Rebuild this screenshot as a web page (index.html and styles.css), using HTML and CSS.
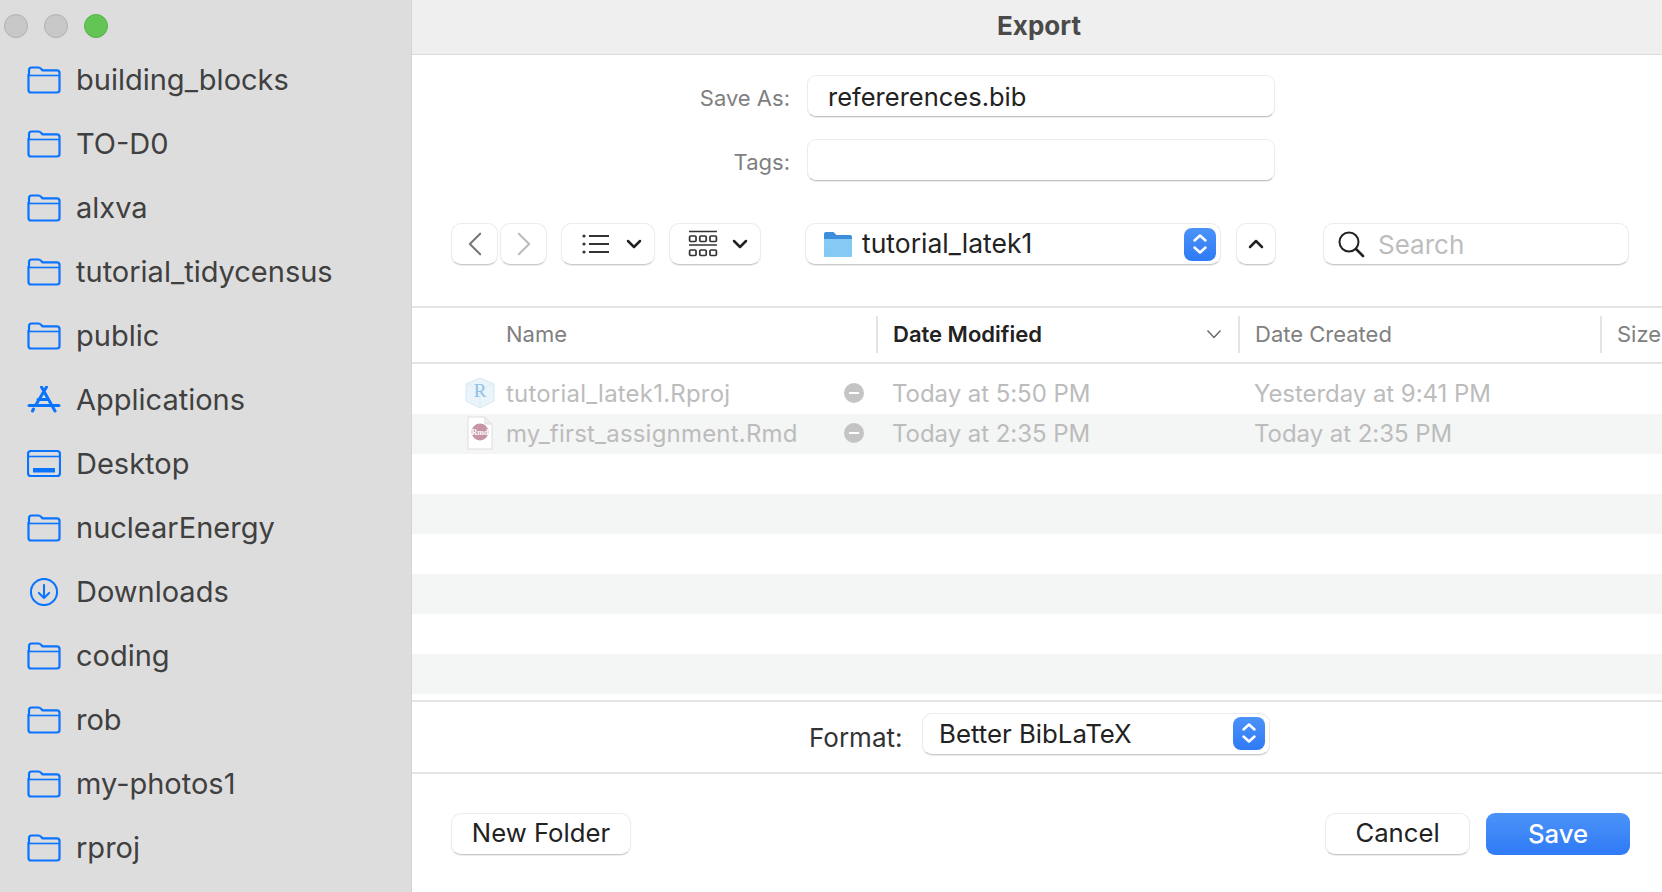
FILE: index.html
```html
<!DOCTYPE html>
<html lang="en">
<head>
    <meta charset="UTF-8">
    <title>Export</title>
    <link rel="stylesheet" href="styles.css">
</head>
<body>
    <svg class="defs" width="0" height="0">
        <symbol id="folder" viewBox="0 0 34 28">
            <path d="M2 9V4.200C2 2.600 2.900 1.500 4.500 1.500H11.500C12.600 1.500 13.200 1.900 14 2.700L15.500 4.300H30C31.600 4.300 32.500 5.200 32.500 6.800V24C32.500 25.600 31.600 26.500 30 26.500H4C2.400 26.500 1.500 25.600 1.500 24V8" fill="none" stroke="#0a74ff" stroke-width="2.200"/>
            <path d="M1.500 9.500H32.500" fill="none" stroke="#0a74ff" stroke-width="1.600"/>
        </symbol>
        <symbol id="stepper" viewBox="0 0 32 32">
            <path d="M10.500 12.500L16 7.500L21.500 12.500M10.500 19.500L16 24.500L21.500 19.500" fill="none" stroke="#fff" stroke-width="2.500" stroke-linecap="round" stroke-linejoin="round"/>
        </symbol>
        <symbol id="chev" viewBox="0 0 16 10">
            <path d="M2 2L8 8L14 2" fill="none" stroke="#222" stroke-width="2.500" stroke-linecap="round" stroke-linejoin="round"/>
        </symbol>
    </svg>

    <div class="window">
        <aside class="sidebar">
            <div class="traffic">
                <span class="light"></span>
                <span class="light"></span>
                <span class="light green"></span>
            </div>
            <ul class="places">
                <li><svg class="place-icon"><use href="#folder"/></svg>building_blocks</li>
                <li><svg class="place-icon"><use href="#folder"/></svg>TO-D0</li>
                <li><svg class="place-icon"><use href="#folder"/></svg>alxva</li>
                <li><svg class="place-icon"><use href="#folder"/></svg>tutorial_tidycensus</li>
                <li><svg class="place-icon"><use href="#folder"/></svg>public</li>
                <li>
                    <svg class="place-icon" viewBox="0 0 34 28">
                        <path d="M14.500 1L28 25M19.500 1L8.500 19.500M6.500 23L5.500 25M2 19.500H32M11 13.500H21" fill="none" stroke="#0a74ff" stroke-width="3" stroke-linecap="round"/>
                    </svg>Applications
                </li>
                <li>
                    <svg class="place-icon" viewBox="0 0 34 28">
                        <rect x="1" y="1" width="32" height="25" rx="3" fill="none" stroke="#0a74ff" stroke-width="2.200"/>
                        <path d="M1 6.500H33" stroke="#0a74ff" stroke-width="1.600"/>
                        <rect x="6" y="18" width="22" height="4.500" fill="#0a74ff"/>
                    </svg>Desktop
                </li>
                <li><svg class="place-icon"><use href="#folder"/></svg>nuclearEnergy</li>
                <li>
                    <svg class="place-icon" viewBox="0 0 34 30">
                        <circle cx="17" cy="15" r="14" fill="none" stroke="#0a74ff" stroke-width="2.200"/>
                        <path d="M17 7.500V21.500M11.500 16L17 21.500L22.500 16" fill="none" stroke="#0a74ff" stroke-width="2.200" stroke-linecap="round" stroke-linejoin="round"/>
                    </svg>Downloads
                </li>
                <li><svg class="place-icon"><use href="#folder"/></svg>coding</li>
                <li><svg class="place-icon"><use href="#folder"/></svg>rob</li>
                <li><svg class="place-icon"><use href="#folder"/></svg>my-photos1</li>
                <li><svg class="place-icon"><use href="#folder"/></svg>rproj</li>
            </ul>
        </aside>

        <main class="dialog">
            <header class="titlebar">Export</header>

            <div class="form-row first">
                <label class="form-label">Save As:</label>
                <div class="field">refererences.bib</div>
            </div>
            <div class="form-row">
                <label class="form-label">Tags:</label>
                <div class="field"></div>
            </div>

            <div class="toolbar">
                <div class="nav">
                    <button class="ctl nav-btn">
                        <svg width="14" height="24" viewBox="0 0 16 28"><path d="M14 2L2 14L14 26" fill="none" stroke="#777" stroke-width="2.400" stroke-linecap="round" stroke-linejoin="round"/></svg>
                    </button>
                    <button class="ctl nav-btn">
                        <svg width="14" height="24" viewBox="0 0 16 28"><path d="M2 2L14 14L2 26" fill="none" stroke="#bbb" stroke-width="2.400" stroke-linecap="round" stroke-linejoin="round"/></svg>
                    </button>
                </div>
                <button class="ctl view-btn list-btn">
                    <svg width="28" height="20" viewBox="0 0 28 20"><path d="M7 2H27M7 10H27M7 18H27" stroke="#333" stroke-width="1.800"/><circle cx="2" cy="2" r="1.600" fill="#333"/><circle cx="2" cy="10" r="1.600" fill="#333"/><circle cx="2" cy="18" r="1.600" fill="#333"/></svg>
                    <svg class="chev"><use href="#chev"/></svg>
                </button>
                <button class="ctl view-btn grid-btn">
                    <svg width="30" height="28" viewBox="0 0 28 28" preserveAspectRatio="none">
                        <path d="M1 1.500H27M1 15H27" stroke="#333" stroke-width="1.600"/>
                        <g fill="none" stroke="#333" stroke-width="1.600">
                            <rect x="1.500" y="6" width="6" height="5.500" rx="1"/><rect x="11" y="6" width="6" height="5.500" rx="1"/><rect x="20.500" y="6" width="6" height="5.500" rx="1"/>
                            <rect x="1.500" y="20" width="6" height="5.500" rx="1"/><rect x="11" y="20" width="6" height="5.500" rx="1"/><rect x="20.500" y="20" width="6" height="5.500" rx="1"/>
                        </g>
                    </svg>
                    <svg class="chev"><use href="#chev"/></svg>
                </button>
                <div class="ctl path-select">
                    <svg class="path-folder" viewBox="0 0 30 27">
                        <path d="M1 3C1 1.800 1.800 1 3 1H10.500L13.500 4H27C28.200 4 29 4.800 29 6V24C29 25.200 28.200 26 27 26H3C1.800 26 1 25.200 1 24Z" fill="#3d8fdc"/>
                        <path d="M1 8H29V24C29 25.200 28.200 26 27 26H3C1.800 26 1 25.200 1 24Z" fill="#85c9f5"/>
                    </svg>
                    <span class="path-name">tutorial_latek1</span>
                    <span class="stepper"><svg width="32" height="32"><use href="#stepper"/></svg></span>
                </div>
                <button class="ctl up-btn">
                    <svg class="chev up"><use href="#chev"/></svg>
                </button>
                <div class="ctl search">
                    <svg width="28" height="28" viewBox="0 0 28 28"><circle cx="12" cy="12" r="9.500" fill="none" stroke="#222" stroke-width="2"/><path d="M19 19L26 26" stroke="#222" stroke-width="2.600" stroke-linecap="round"/></svg>
                    <span class="search-text">Search</span>
                </div>
            </div>

            <div class="table-head">
                <div class="col col-name">Name</div>
                <div class="col col-date sorted">Date Modified
                    <svg width="16" height="10" viewBox="0 0 16 10"><path d="M1.500 1.500L8 8.500L14.500 1.500" fill="none" stroke="#666" stroke-width="1.400"/></svg>
                </div>
                <div class="col col-created">Date Created</div>
                <div class="col col-size">Size</div>
            </div>

            <div class="rows">
                <div class="row">
                    <div class="cell-icon">
                        <svg width="34" height="32" viewBox="0 0 34 32">
                            <path d="M17 1L31 7V24L17 31L3 24V7Z" fill="#eaf4fb" stroke="#d8e8f3"/>
                            <path d="M3 7L17 12L31 7M17 12V31" fill="none" stroke="#dcebf5" stroke-width="0.800"/>
                            <text x="17" y="20" text-anchor="middle" class="r-letter">R</text>
                        </svg>
                    </div>
                    <div class="cell-name">tutorial_latek1.Rproj</div>
                    <div class="cell-badge"><span class="minus"></span></div>
                    <div class="cell-date">Today at 5:50 PM</div>
                    <div class="cell-date">Yesterday at 9:41 PM</div>
                </div>
                <div class="row stripe">
                    <div class="cell-icon">
                        <svg width="26" height="34" viewBox="0 0 26 34">
                            <path d="M1 1H18L25 8V33H1Z" fill="#fff" stroke="#ddd"/>
                            <path d="M18 1V8H25" fill="#eee" stroke="#ddd"/>
                            <circle cx="13" cy="16" r="8.500" fill="#c796a6"/>
                            <text x="13" y="19" text-anchor="middle" class="rmd-letter">Rmd</text>
                        </svg>
                    </div>
                    <div class="cell-name">my_first_assignment.Rmd</div>
                    <div class="cell-badge"><span class="minus"></span></div>
                    <div class="cell-date">Today at 2:35 PM</div>
                    <div class="cell-date">Today at 2:35 PM</div>
                </div>
                <div class="row"></div>
                <div class="row stripe"></div>
                <div class="row"></div>
                <div class="row stripe"></div>
                <div class="row"></div>
                <div class="row stripe"></div>
            </div>

            <div class="format-bar">
                <label class="format-label">Format:</label>
                <div class="ctl format-select">
                    <span>Better BibLaTeX</span>
                    <span class="stepper"><svg width="32" height="32"><use href="#stepper"/></svg></span>
                </div>
            </div>

            <footer class="actions">
                <button class="ctl action new-folder">New Folder</button>
                <div class="actions-right">
                    <button class="ctl action cancel">Cancel</button>
                    <button class="action save">Save</button>
                </div>
            </footer>
        </main>
    </div>
</body>
</html>
```

FILE: styles.css
```css
* {
    box-sizing: border-box;
}

body {
    margin: 0;
    font-family: Inter, "Noto Sans", sans-serif;
    background: #fff;
    color: #222;
}

.defs {
    display: block;
    height: 0;
}

.window {
    display: flex;
    width: 1662px;
    height: 892px;
    overflow: hidden;
}

/* sidebar */
.sidebar {
    width: 412px;
    flex-shrink: 0;
    background: #dddddd;
    border-right: 1px solid #d3d3d3;
}

.traffic {
    display: flex;
    gap: 16px;
    height: 48px;
    padding: 14px 0 0 4px;
}

.light {
    width: 24px;
    height: 24px;
    border-radius: 50%;
    background: #c8c8c8;
    border: 1px solid #b0b0b0;
}

.light.green {
    background: #62c554;
    border-color: #55b048;
}

.places {
    list-style: none;
    margin: 0;
    padding: 0;
}

.places li {
    display: flex;
    align-items: center;
    height: 64px;
    padding-left: 27px;
    padding-bottom: 2px;
    font-size: 29px;
    color: #404040;
}

.place-icon {
    width: 34px;
    height: 28px;
    margin-top: 2px;
    margin-right: 15px;
    flex-shrink: 0;
}

/* dialog */
.dialog {
    flex: 1;
    min-width: 0;
}

.titlebar {
    height: 55px;
    background: #efefef;
    border-bottom: 1px solid #dcdcdc;
    display: flex;
    align-items: center;
    justify-content: center;
    font-size: 26px;
    font-weight: 700;
    color: #4a4a4a;
    padding-left: 4px;
    padding-bottom: 4px;
}

.form-row {
    display: flex;
    align-items: center;
    gap: 17px;
    margin-top: 22px;
}

.form-row.first {
    margin-top: 20px;
}

.form-label {
    width: 378px;
    text-align: right;
    font-size: 22px;
    color: #808080;
    padding-top: 4px;
}

.field {
    width: 468px;
    height: 42px;
    padding-left: 20px;
    padding-top: 1px;
    line-height: 40px;
    font-size: 25.5px;
    background: #fff;
    border: 1px solid #ececec;
    border-bottom: 1px solid #c4c4c4;
    border-radius: 9px;
    box-shadow: 0 1px 1px rgba(0, 0, 0, 0.08);
}

/* toolbar */
.ctl {
    background: #fff;
    border: 1px solid #ececec;
    border-bottom: 1px solid #c9c9c9;
    border-radius: 10px;
    box-shadow: 0 1px 1px rgba(0, 0, 0, 0.08);
    font-family: inherit;
    padding: 0;
}

.toolbar {
    display: flex;
    height: 42px;
    margin-top: 42px;
    margin-left: 39px;
}

.toolbar .ctl {
    height: 42px;
    display: flex;
    align-items: center;
}

.nav {
    display: flex;
    gap: 2px;
}

.nav-btn {
    width: 47px;
    justify-content: center;
}

.view-btn {
    justify-content: space-between;
    padding: 0 12px 0 20px;
}

.list-btn {
    width: 94px;
    margin-left: 14px;
}

.grid-btn {
    width: 92px;
    margin-left: 14px;
    padding-left: 18px;
}

.chev {
    width: 16px;
    height: 10px;
}

.chev.up {
    transform: rotate(180deg);
}

.path-select {
    width: 416px;
    margin-left: 44px;
    padding: 0 4px 0 17px;
}

.path-folder {
    width: 30px;
    height: 27px;
    margin-right: 9px;
}

.path-name {
    flex: 1;
    font-size: 26.5px;
    color: #222;
    padding-bottom: 2px;
}

.stepper {
    width: 32px;
    height: 33px;
    border-radius: 8px;
    background: linear-gradient(#4b93f8, #2f7af6);
    display: block;
}

.up-btn {
    width: 40px;
    margin-left: 15px;
    justify-content: center;
}

.search {
    width: 306px;
    margin-left: 47px;
    padding-left: 13px;
    gap: 13px;
}

.search-text {
    font-size: 26px;
    color: #bdbdbd;
}

/* file table */
.table-head {
    display: flex;
    align-items: center;
    height: 58px;
    margin-top: 41px;
    padding-bottom: 2px;
    border-top: 2px solid #e4e4e4;
    border-bottom: 2px solid #e4e4e4;
    font-size: 22px;
    color: #808080;
    white-space: nowrap;
}

.col {
    height: 37px;
    display: flex;
    align-items: center;
    border-left: 2px solid #e4e4e4;
    padding-left: 15px;
}

.col-name {
    width: 464px;
    padding-left: 94px;
    border-left: none;
}

.col-date {
    width: 362px;
    justify-content: space-between;
    padding-right: 16px;
}

.sorted {
    color: #222;
    font-weight: 600;
}

.col-created {
    width: 362px;
}

.rows {
    padding-top: 10px;
}

.row {
    display: flex;
    align-items: center;
    height: 40px;
    padding-bottom: 2px;
    font-size: 24px;
    color: #bcbcbc;
    white-space: nowrap;
}

.row.stripe {
    background: #f4f5f5;
}

.cell-icon {
    width: 94px;
    padding-left: 42px;
    display: flex;
    align-items: center;
    justify-content: center;
}

.cell-name {
    width: 338px;
    letter-spacing: 0.2px;
}

.cell-badge {
    width: 48px;
}

.minus {
    display: block;
    width: 20px;
    height: 20px;
    border-radius: 50%;
    background: #c4c4c4;
    position: relative;
}

.minus::after {
    content: "";
    position: absolute;
    left: 5px;
    top: 9px;
    width: 10px;
    height: 2px;
    background: #fff;
}

.cell-date {
    width: 362px;
    letter-spacing: -0.05px;
}

.r-letter {
    font-family: "Liberation Serif", serif;
    font-size: 19px;
    fill: #8fc0e6;
}

.rmd-letter {
    font-family: "Liberation Serif", serif;
    font-size: 8px;
    font-weight: 700;
    fill: #fff;
}

/* bottom */
.format-bar {
    display: flex;
    align-items: center;
    height: 74px;
    margin-top: 6px;
    border-top: 2px solid #e4e4e4;
    border-bottom: 2px solid #e4e4e4;
    padding-left: 397px;
}

.format-label {
    width: 113px;
    font-size: 26px;
    color: #333;
}

.format-select {
    width: 348px;
    height: 42px;
    margin-top: -7px;
    display: flex;
    align-items: center;
    justify-content: space-between;
    padding: 0 4px 0 16px;
    font-size: 25.8px;
    color: #222;
}

.actions {
    display: flex;
    justify-content: space-between;
    align-items: center;
    padding: 39px 32px 0 39px;
}

.actions-right {
    display: flex;
    gap: 16px;
}

.action {
    height: 42px;
    padding-bottom: 3px;
    font-size: 25.7px;
    font-family: inherit;
    color: #222;
}

.new-folder {
    width: 180px;
}

.cancel {
    width: 145px;
}

.save {
    width: 144px;
    border: none;
    border-radius: 9px;
    color: #fff;
    font-weight: 500;
    background: linear-gradient(#4b93f8, #2f7af6);
}
```
